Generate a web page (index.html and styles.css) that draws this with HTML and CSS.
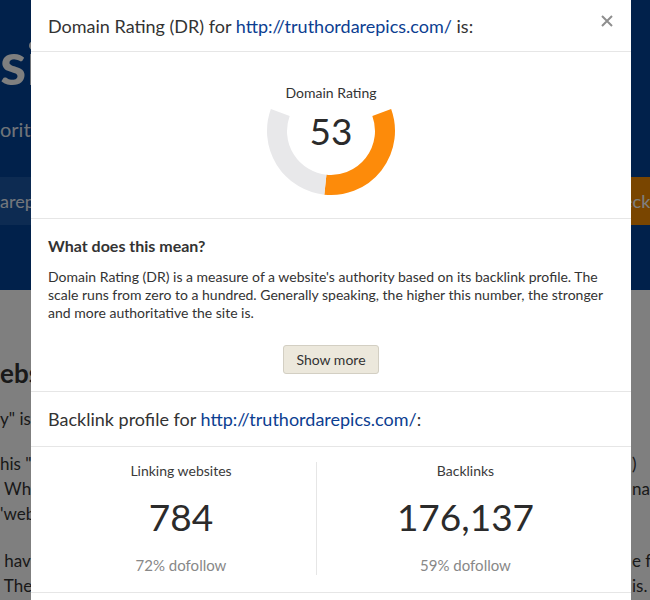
FILE: index.html
```html
<!DOCTYPE html>
<html lang="en">
<head>
<meta charset="utf-8">
<title>Domain Rating</title>
<link rel="stylesheet" href="styles.css">
</head>
<body>
<div class="page">
  <header class="hero">
    <h1 class="hero-title">si</h1>
    <div class="hero-sub">orit</div>
    <div class="hero-form">
      <div class="hero-input">arepics.com</div>
      <div class="hero-btn">Check</div>
    </div>
  </header>
  <main class="content">
    <h2 class="content-h">ebsite</h2>
    <div class="para p1">
      <div class="bgline"><span>y" is</span><span class="r"></span></div>
    </div>
    <div class="para p2">
      <div class="bgline"><span>his "c</span><span class="r">)</span></div>
      <div class="bgline"><span>&nbsp;Whe</span><span class="r">nat</span></div>
      <div class="bgline"><span>'web</span><span class="r"></span></div>
    </div>
    <div class="para p3">
      <div class="bgline"><span>&nbsp;hav</span><span class="r">e fr</span></div>
      <div class="bgline"><span>&nbsp;The</span><span class="r">is.</span></div>
    </div>
  </main>
</div>

<div class="backdrop"></div>

<div class="modal">
  <div class="modal-head">
    <div class="modal-title">Domain Rating (DR) for <a class="link" href="#">http://truthordarepics.com/</a> is:</div>
    <svg class="close" width="12" height="12" viewBox="0 0 12 12"><path d="M1 1L11 11M11 1L1 11" stroke="#8e8e8e" stroke-width="2" fill="none"/></svg>
  </div>

  <section class="gauge-sec">
    <div class="gauge">
      <svg class="gauge-svg" width="130" height="130" viewBox="0 0 130 130">
        <path d="M115.74 46.53A54 54 0 0 1 59.36 118.70" stroke="#fd8b0a" stroke-width="20" fill="none"/>
        <path d="M59.36 118.70A54 54 0 0 1 14.26 46.53" stroke="#e8e8ea" stroke-width="20" fill="none"/>
      </svg>
      <div class="gauge-label">Domain Rating</div>
      <div class="gauge-num">53</div>
    </div>
  </section>

  <section class="meaning">
    <h3 class="meaning-h">What does this mean?</h3>
    <p class="meaning-p">Domain Rating (DR) is a measure of a website's authority based on its backlink profile. The scale runs from zero to a hundred. Generally speaking, the higher this number, the stronger and more authoritative the site is.</p>
    <div class="btn-row"><button class="btn">Show more</button></div>
  </section>

  <div class="modal-sub">
    <div class="modal-title">Backlink profile for <a class="link" href="#">http://truthordarepics.com/</a>:</div>
  </div>

  <section class="stats">
    <div class="stat stat-left">
      <div class="stat-label">Linking websites</div>
      <div class="stat-num">784</div>
      <div class="stat-foot">72% dofollow</div>
    </div>
    <div class="stat stat-right">
      <div class="stat-label">Backlinks</div>
      <div class="stat-num">176,137</div>
      <div class="stat-foot">59% dofollow</div>
    </div>
  </section>
</div>
</body>
</html>
```

FILE: styles.css
```css
html, body {
  margin: 0;
  padding: 0;
}
body {
  width: 650px;
  height: 600px;
  overflow: hidden;
  font-family: Lato, "Open Sans", "Liberation Sans", sans-serif;
  color: #333;
  background: #fff;
}

/* background page */
.hero {
  background: #024396;
  height: 290px;
  box-sizing: border-box;
  padding-top: 32px;
  color: #fff;
}
.hero-title {
  margin: 0;
  font-size: 60px;
  line-height: 60px;
  font-weight: 700;
}
.hero-sub {
  margin-top: 25px;
  font-size: 20px;
  line-height: 24px;
  color: rgba(255,255,255,0.9);
}
.hero-form {
  display: flex;
  height: 48px;
  margin-top: 36px;
}
.hero-input {
  flex: 1;
  background: #1b57a5;
  color: #e8eef8;
  font-size: 18px;
  display: flex;
  align-items: center;
  white-space: nowrap;
  overflow: hidden;
}
.hero-btn {
  flex: none;
  width: 70px;
  box-sizing: border-box;
  padding-left: 21px;
  background: #f28b00;
  color: #fff;
  font-size: 18px;
  display: flex;
  align-items: center;
  white-space: nowrap;
  overflow: hidden;
}
.content {
  padding-top: 67px;
  color: #333;
}
.content-h {
  margin: 0;
  font-size: 26px;
  line-height: 32px;
  font-weight: 700;
}
.para { margin-top: 20px; }
.p1 { margin-top: 17px; }
.p3 { margin-top: 22px; }
.bgline {
  display: flex;
  font-size: 17px;
  line-height: 25px;
  white-space: nowrap;
}
.bgline .r {
  margin-left: auto;
  width: 18px;
  flex: none;
  overflow: hidden;
}

.backdrop {
  position: fixed;
  inset: 0;
  background: rgba(0,0,0,0.5);
}

/* modal */
.modal {
  position: absolute;
  top: 0;
  left: 31px;
  width: 600px;
  background: #fff;
  padding-bottom: 20px;
}
.modal-head {
  height: 52px;
  box-sizing: border-box;
  border-bottom: 1px solid #e6e6e6;
  display: flex;
  align-items: center;
  justify-content: space-between;
  padding: 0 18px 0 17px;
}
.modal-title {
  font-size: 18px;
  color: #333;
  white-space: nowrap;
}
.link {
  color: #0c3e91;
  text-decoration: none;
}
.close {
  align-self: flex-start;
  margin-top: 15px;
}

.gauge-sec {
  height: 167px;
  box-sizing: border-box;
  border-bottom: 1px solid #e6e6e6;
  padding-top: 14px;
  display: flex;
  justify-content: center;
}
.gauge {
  position: relative;
  width: 130px;
  height: 130px;
  display: flex;
  flex-direction: column;
  align-items: center;
}
.gauge-svg {
  position: absolute;
  left: 0;
  top: 0;
}
.gauge-label {
  position: relative;
  margin-top: 18px;
  font-size: 14px;
  line-height: 17px;
  color: #333;
  white-space: nowrap;
}
.gauge-num {
  position: relative;
  margin-top: 10px;
  font-size: 37px;
  line-height: 40px;
  color: #2b2b2b;
}

.meaning {
  padding: 17px 17px 17px;
  border-bottom: 1px solid #e6e6e6;
}
.meaning-h {
  margin: 0;
  font-size: 16px;
  line-height: 20px;
  font-weight: 700;
  color: #333;
}
.meaning-p {
  margin: 12px 0 0;
  font-size: 14px;
  line-height: 18px;
  color: #333;
}
.btn-row {
  display: flex;
  justify-content: center;
  margin-top: 23px;
}
.btn {
  width: 96px;
  height: 29px;
  box-sizing: border-box;
  border: 1px solid #d3cfc3;
  border-radius: 3px;
  background: #ece8dc;
  font-family: Lato, "Open Sans", sans-serif;
  font-size: 14px;
  color: #333;
  padding: 0;
}

.modal-sub {
  height: 55px;
  box-sizing: border-box;
  border-bottom: 1px solid #e6e6e6;
  display: flex;
  align-items: center;
  padding: 0 17px;
}

.stats {
  display: grid;
  grid-template-columns: 270px 1fr;
  padding: 15px 17px 17px 15px;
  border-bottom: 1px solid #e6e6e6;
}
.stat {
  display: flex;
  flex-direction: column;
  align-items: center;
  text-align: center;
}
.stat-right {
  border-left: 1px solid #e6e6e6;
}
.stat-label {
  font-size: 14px;
  line-height: 18px;
  color: #3a3a3a;
}
.stat-num {
  margin-top: 15px;
  font-size: 37px;
  line-height: 44px;
  color: #2b2b2b;
}
.stat-foot {
  margin-top: 16px;
  font-size: 15px;
  line-height: 20px;
  color: #888;
}
```
